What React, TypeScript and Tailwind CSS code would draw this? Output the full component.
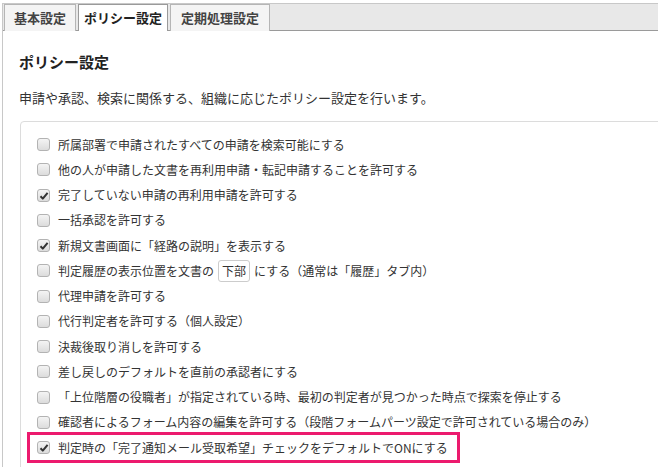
import React from "react";

const font = { fontFamily: '"Noto Sans CJK JP", "Noto Sans", sans-serif' };

function Checkbox({ checked }: { checked?: boolean }) {
  return (
    <span className="relative inline-block w-[13px] h-[13px] shrink-0 rounded-[3px] border border-[#b3b3b3] bg-gradient-to-b from-[#f4f4f4] to-[#dcdcdc]">
      {checked && (
        <svg className="absolute left-[1px] top-[1px]" width="10" height="10" viewBox="0 0 10 10">
          <path d="M1.5 5.2 L3.8 7.6 L8.6 1.8" stroke="#333" strokeWidth="2" fill="none" strokeLinejoin="round" />
        </svg>
      )}
    </span>
  );
}

type Item = { text: React.ReactNode; checked?: boolean; highlight?: boolean };

const items: Item[] = [
  { text: "所属部署で申請されたすべての申請を検索可能にする" },
  { text: "他の人が申請した文書を再利用申請・転記申請することを許可する" },
  { text: "完了していない申請の再利用申請を許可する", checked: true },
  { text: "一括承認を許可する" },
  { text: "新規文書画面に「経路の説明」を表示する", checked: true },
  {
    text: (
      <>
        判定履歴の表示位置を文書の
        <span className="inline-flex items-center h-[22px] mx-[4px] px-[3px] border border-[#ccc] rounded-[3px] bg-white">下部</span>
        にする（通常は「履歴」タブ内）
      </>
    ),
  },
  { text: "代理申請を許可する" },
  { text: "代行判定者を許可する（個人設定）" },
  { text: "決裁後取り消しを許可する" },
  { text: "差し戻しのデフォルトを直前の承認者にする" },
  { text: "「上位階層の役職者」が指定されている時、最初の判定者が見つかった時点で探索を停止する" },
  { text: "確認者によるフォーム内容の編集を許可する（段階フォームパーツ設定で許可されている場合のみ）" },
  { text: "判定時の「完了通知メール受取希望」チェックをデフォルトでONにする", checked: true, highlight: true },
];

export default function App() {
  return (
    <div className="w-[658px] h-[467px] bg-white overflow-hidden pt-[3px] pl-[2px] text-[#333]" style={font}>
      <div className="border-l border-t border-[#c8c8c8] h-full">
        <div className="h-[27px] bg-[#e8e8e8] border-b border-[#9a9a9a] flex items-stretch gap-[2px] pl-px">
          <div className="w-[72px] -mb-px border border-b-0 border-[#b5b5b5] bg-[#f4f4f4] flex items-center justify-center text-[13px] font-bold text-[#444]">
            基本設定
          </div>
          <div className="w-[90px] -mb-px border border-b-0 border-[#9a9a9a] bg-white flex items-center justify-center text-[13px] font-bold text-[#222]">
            ポリシー設定
          </div>
          <div className="w-[100px] -mb-px border border-b-0 border-[#b5b5b5] bg-[#f4f4f4] flex items-center justify-center text-[13px] font-bold text-[#444]">
            定期処理設定
          </div>
        </div>
        <div className="pl-[16px] pt-[21px]">
          <h2 className="text-[15px] leading-[20px] font-bold text-[#222]">ポリシー設定</h2>
          <p className="mt-[17px] text-[13px] leading-[18px]">申請や承認、検索に関係する、組織に応じたポリシー設定を行います。</p>
          <div className="mt-[14px] ml-px w-[700px] h-[400px] border border-[#dcdcdc] rounded-[4px] pt-[10px] pl-[16px]">
            {items.map((it, i) => (
              <div key={i} className="relative h-[25.25px] flex items-center gap-[8px] text-[12px] whitespace-nowrap">
                {it.highlight && (
                  <span className="absolute left-[-10px] top-[-3px] w-[433px] h-[31px] border-[3px] border-[#ec1a6e]" />
                )}
                <Checkbox checked={it.checked} />
                <span className="leading-[18px] flex items-center">{it.text}</span>
              </div>
            ))}
          </div>
        </div>
      </div>
    </div>
  );
}
